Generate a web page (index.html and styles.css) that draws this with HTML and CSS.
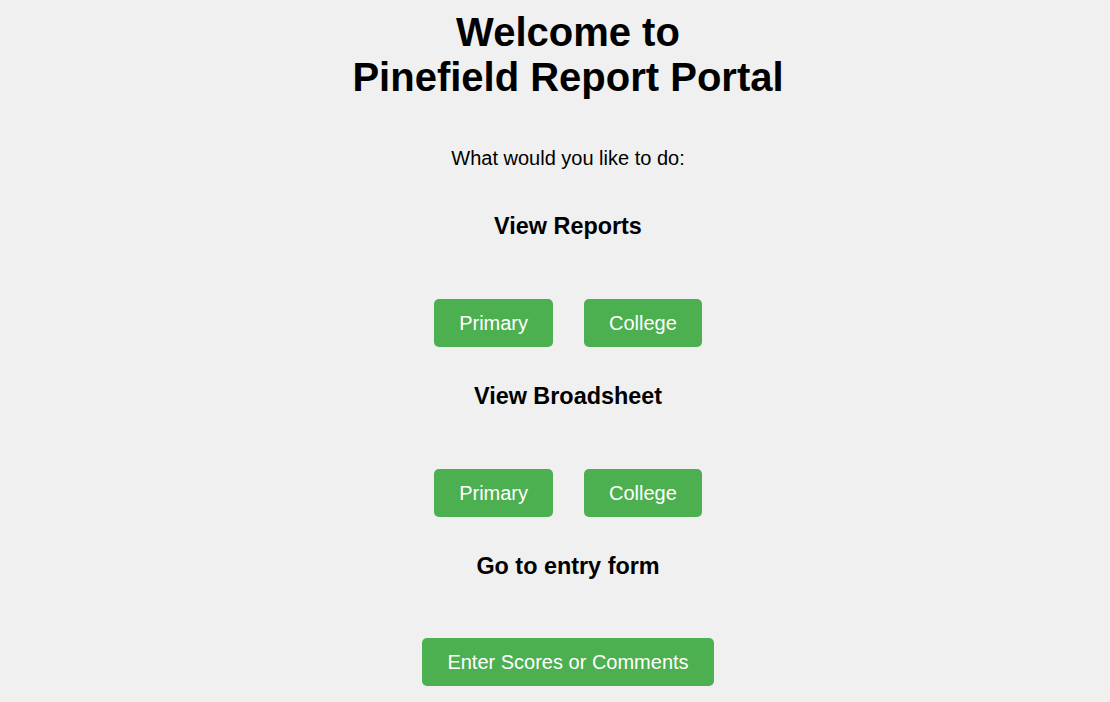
FILE: index.html
```html
<!DOCTYPE html>
<html lang="en">
<head>
<meta charset="utf-8">
<title>Pinefield Report Portal</title>
<link rel="stylesheet" href="styles.css">
</head>
<body>
<main class="portal">
  <h1 class="title">Welcome to<br>Pinefield Report Portal</h1>
  <p class="prompt">What would you like to do:</p>

  <section class="group">
    <h3 class="group-title">View Reports</h3>
    <div class="actions">
      <button class="btn">Primary</button>
      <button class="btn">College</button>
    </div>
  </section>

  <section class="group">
    <h3 class="group-title">View Broadsheet</h3>
    <div class="actions">
      <button class="btn">Primary</button>
      <button class="btn">College</button>
    </div>
  </section>

  <section class="group">
    <h3 class="group-title">Go to entry form</h3>
    <div class="actions actions-last">
      <button class="btn">Enter Scores or Comments</button>
    </div>
  </section>
</main>
</body>
</html>
```
FILE: styles.css
```css
html, body {
  margin: 0;
  padding: 0;
  background: #f0f0f0;
}

body {
  font-family: "Liberation Sans", Arial, sans-serif;
  color: #000;
}

.portal {
  display: flex;
  flex-direction: column;
  align-items: center;
  text-align: center;
  padding: 10px 0 0 26px;
}

.title {
  margin: 0;
  font-size: 40px;
  line-height: 45px;
  font-weight: bold;
}

.prompt {
  margin: 47px 0 0;
  font-size: 20px;
  line-height: 23px;
}

.group {
  display: flex;
  flex-direction: column;
  align-items: center;
}

.group-title {
  margin: 43px 0 0;
  font-size: 23.4px;
  line-height: 27px;
  font-weight: bold;
}

.actions {
  display: flex;
  gap: 31px;
  margin-top: 59px;
}

.actions-last {
  margin-top: 58px;
}

.group + .group .group-title {
  margin-top: 36px;
}

.btn {
  font-family: "Liberation Sans", Arial, sans-serif;
  font-size: 20px;
  line-height: 24px;
  color: #fff;
  background: #4caf50;
  border: none;
  border-radius: 5px;
  padding: 12px 25px;
  cursor: pointer;
}
```
